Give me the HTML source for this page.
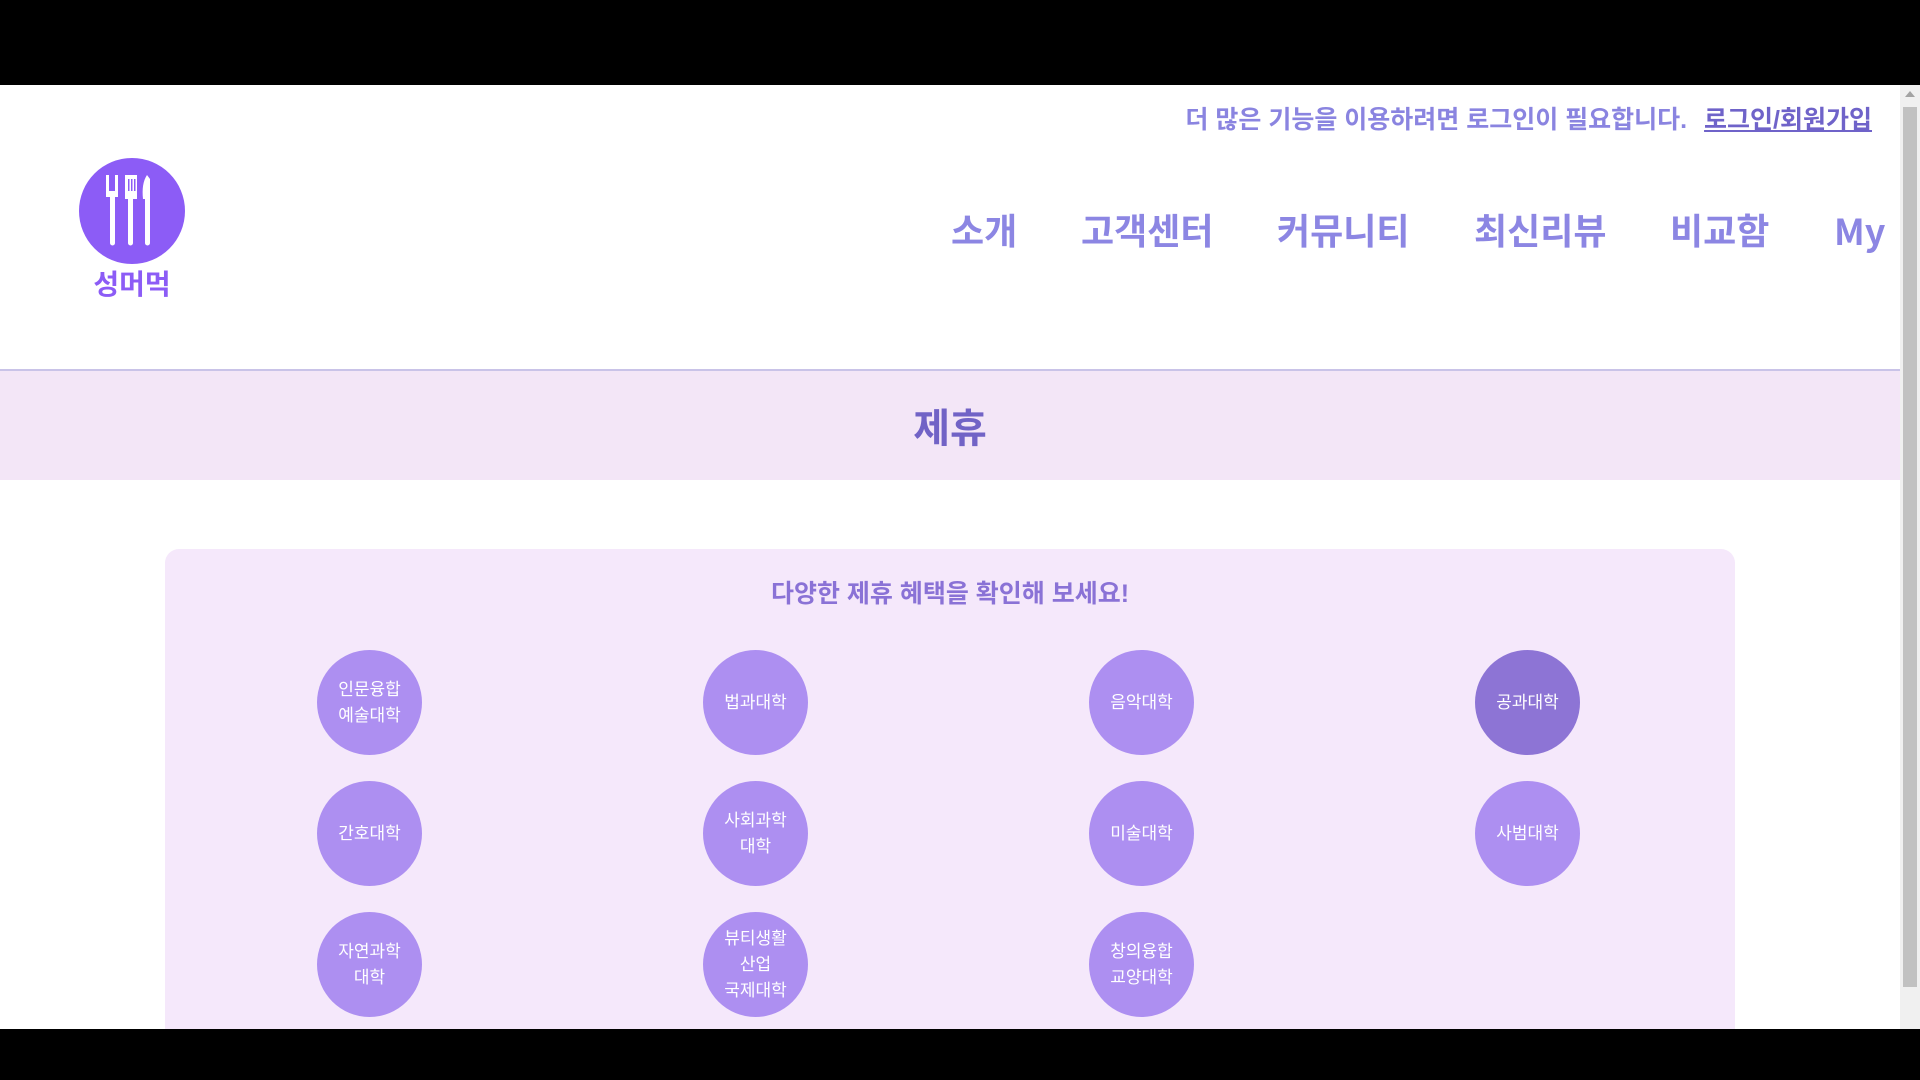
<!DOCTYPE html>
<html><head><meta charset="utf-8"><style>
*{margin:0;padding:0;box-sizing:border-box}
body{width:1920px;height:1080px;overflow:hidden;background:#000;position:relative;font-family:"Liberation Sans","Noto Sans CJK KR",sans-serif}
.page{position:absolute;left:0;top:85px;width:1900px;height:944px;background:#fff;overflow:hidden}
.sb{position:absolute;left:1900px;top:85px;width:20px;height:944px;background:#f0f0f0}
.sb .th{position:absolute;left:3px;top:22px;width:14px;height:880px;background:#c1c1c1}
.sb .ar{position:absolute;left:5px;top:6px;width:0;height:0;border-left:5px solid transparent;border-right:5px solid transparent;border-bottom:6px solid #a3a3a3}
.msg{position:absolute;right:28px;top:15px;font-size:25px;font-weight:bold;color:#8a84e0;white-space:nowrap}
.msg a{color:#6f63c9;text-decoration:underline;margin-left:10px}
.logo{position:absolute;left:79px;top:73px;width:106px;height:106px;border-radius:50%;background:#8c5cf6}
.lt{position:absolute;left:60px;top:178px;width:144px;text-align:center;font-size:28px;font-weight:bold;color:#8c5cf6}
.nav span{position:absolute;top:122px;height:50px;line-height:50px;font-size:36px;font-weight:bold;color:#8c86e3;white-space:nowrap}
.nav span.my{font-family:"Noto Sans CJK KR",sans-serif;top:120px}
.line{position:absolute;left:0;top:284px;width:1900px;height:2px;background:#c9c3e8}
.band{position:absolute;left:0;top:286px;width:1900px;height:109px;background:#f3e6f7}
.band h1{text-align:center;font-size:40px;line-height:117px;color:#7163c6}
.card{position:absolute;left:165px;top:464px;width:1570px;height:600px;background:#f5e8fb;border-radius:14px}
.card h2{position:absolute;top:25px;width:100%;text-align:center;font-size:25px;color:#8a72d6}
.c{position:absolute;width:105px;height:105px;border-radius:50%;background:#ad8ff1;color:#fff;font-size:17px;line-height:26px;display:flex;align-items:center;justify-content:center;text-align:center}
.c.h{background:#8d74d5}
</style></head><body>
<div class="page">
<div class="msg">더 많은 기능을 이용하려면 로그인이 필요합니다. <a>로그인/회원가입</a></div>
<div class="logo"><svg width="106" height="106" viewBox="0 0 106 106">
<g fill="#fff">
<rect x="27" y="17" width="3" height="18"/><rect x="36" y="17" width="3" height="18"/><path d="M27 33h12v6h-3v46a2.5 2.5 0 0 1-5 0V39h-4z"/>
<path d="M46 17h12v24h-4v44a2.5 2.5 0 0 1-5 0V41h-3z"/>
<path d="M68 17c-4 6-5 14-4 24h2v44a2.5 2.5 0 0 0 5 0V21z"/>
</g><g fill="#8c5cf6"><rect x="49" y="21" width="1.5" height="12"/><rect x="52" y="21" width="1.5" height="12"/><rect x="55" y="21" width="1.5" height="12"/></g></svg></div>
<div class="lt">성머먹</div>
<div class="nav">
<span style="left:951px">소개</span><span style="left:1081px">고객센터</span><span style="left:1277px">커뮤니티</span><span style="left:1474px">최신리뷰</span><span style="left:1670px">비교함</span><span class="my" style="left:1834px">My</span>
</div>
<div class="line"></div>
<div class="band"><h1>제휴</h1></div>
<div class="card"><h2>다양한 제휴 혜택을 확인해 보세요!</h2>
<div class="c" style="left:152px;top:101px">인문융합<br>예술대학</div>
<div class="c" style="left:538px;top:101px">법과대학</div>
<div class="c" style="left:924px;top:101px">음악대학</div>
<div class="c h" style="left:1310px;top:101px">공과대학</div>
<div class="c" style="left:152px;top:232px">간호대학</div>
<div class="c" style="left:538px;top:232px">사회과학<br>대학</div>
<div class="c" style="left:924px;top:232px">미술대학</div>
<div class="c" style="left:1310px;top:232px">사범대학</div>
<div class="c" style="left:152px;top:363px">자연과학<br>대학</div>
<div class="c" style="left:538px;top:363px">뷰티생활<br>산업<br>국제대학</div>
<div class="c" style="left:924px;top:363px">창의융합<br>교양대학</div>
</div>
</div>
<div class="sb"><div class="ar"></div><div class="th"></div></div>
</body></html>
